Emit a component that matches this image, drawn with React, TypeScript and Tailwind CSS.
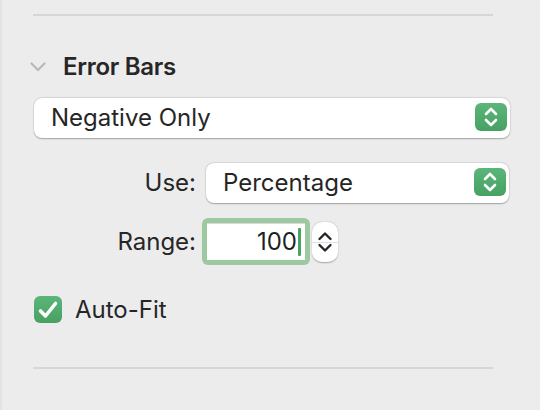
import React from "react";

function UpDown() {
  return (
    <svg width="16" height="24" viewBox="0 0 16 24" fill="none">
      <path d="M3 9 L8 4 L13 9" stroke="white" strokeWidth="2.6" strokeLinecap="round" strokeLinejoin="round" />
      <path d="M3 15 L8 20 L13 15" stroke="white" strokeWidth="2.6" strokeLinecap="round" strokeLinejoin="round" />
    </svg>
  );
}

function Popup({ label, className }: { label: string; className: string }) {
  return (
    <div
      className={`relative h-[40px] rounded-[8px] bg-white flex items-center pl-[17px] shadow-[0_0.5px_1.5px_rgba(0,0,0,0.3),0_0_0_0.5px_rgba(0,0,0,0.06)] ${className}`}
    >
      <span className="text-[24px] leading-none text-[#262626]">{label}</span>
      <div className="absolute right-[3px] top-[5px] w-[32px] h-[28px] rounded-[6px] bg-gradient-to-b from-[#5cb57a] to-[#46a162] flex items-center justify-center">
        <UpDown />
      </div>
    </div>
  );
}

export default function App() {
  return (
    <div
      className="w-[540px] h-[410px] bg-[#ececed] flex overflow-hidden"
      style={{ fontFamily: "Inter, 'Noto Sans', sans-serif" }}
    >
      <div className="w-[2px] h-full bg-[#e3e3e5]" />
      <div className="flex-1 pl-[31px] pt-[14px] flex flex-col">
        <div className="w-[460px] h-[2px] bg-[#d6d6d8]" />

        <div className="mt-[36px] h-[30px] flex items-center -ml-[3px]">
          <svg width="16" height="10" viewBox="0 0 16 10" fill="none">
            <path d="M1.5 1.5 L8 8 L14.5 1.5" stroke="#b8b8ba" strokeWidth="2.2" strokeLinecap="round" strokeLinejoin="round" />
          </svg>
          <span className="ml-[17px] text-[24px] font-semibold text-[#262626] leading-none tracking-[-0.3px]">
            Error Bars
          </span>
        </div>

        <Popup label="Negative Only" className="mt-[16px] ml-[1px] w-[476px]" />

        <div className="mt-[25px] flex items-center">
          <div className="w-[163px] text-right text-[24px] leading-none text-[#262626]">Use:</div>
          <Popup label="Percentage" className="ml-[10px] w-[303px]" />
        </div>

        <div className="mt-[15px] flex items-center">
          <div className="w-[163px] text-right text-[24px] leading-none text-[#262626]">Range:</div>
          <div className="ml-[6px] w-[108px] h-[47px] rounded-[6px] bg-[#9dc9a1] p-[5px]">
            <div className="w-full h-full bg-white flex items-center justify-end pr-[4px] shadow-[inset_0_1px_0_rgba(0,0,0,0.15)]">
              <span className="text-[24px] leading-none text-[#1f1f1f]">100</span>
              <span className="ml-[1px] w-[3px] h-[28px] bg-[#47a463] rounded-[1px]" />
            </div>
          </div>
          <div className="ml-[2px] w-[26px] h-[40px] rounded-[10px] bg-white shadow-[0_0.5px_1.5px_rgba(0,0,0,0.3)] flex flex-col items-center">
            <div className="h-[19px] flex items-end">
              <svg width="16" height="10" viewBox="0 0 16 10" fill="none">
                <path d="M2.5 8 L8 2.5 L13.5 8" stroke="#262626" strokeWidth="2.4" strokeLinecap="round" strokeLinejoin="round" />
              </svg>
            </div>
            <div className="w-full h-[1px] bg-[#e0e0e0] mt-[1px]" />
            <div className="h-[19px] flex items-start">
              <svg width="16" height="10" viewBox="0 0 16 10" fill="none">
                <path d="M2.5 2 L8 7.5 L13.5 2" stroke="#262626" strokeWidth="2.4" strokeLinecap="round" strokeLinejoin="round" />
              </svg>
            </div>
          </div>
        </div>

        <div className="mt-[31px] flex items-center ml-[1px]">
          <div className="w-[28px] h-[27px] rounded-[6px] bg-gradient-to-b from-[#5cb57a] to-[#46a162] flex items-center justify-center">
            <svg width="24" height="22" viewBox="0 0 24 22" fill="none">
              <path d="M4.5 12 L9.5 17 L19.5 4.5" stroke="white" strokeWidth="3.6" strokeLinecap="round" strokeLinejoin="round" />
            </svg>
          </div>
          <span className="ml-[13px] text-[24px] leading-none text-[#262626]">Auto-Fit</span>
        </div>

        <div className="mt-[44px] w-[460px] h-[2px] bg-[#d6d6d8]" />
      </div>
    </div>
  );
}
